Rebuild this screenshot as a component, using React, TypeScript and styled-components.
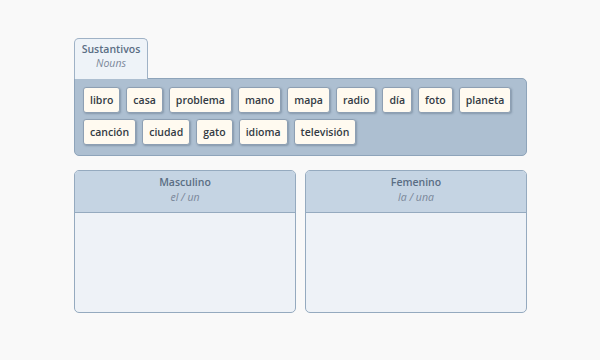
import React from "react";
import styled, { createGlobalStyle } from "styled-components";

const GlobalStyle = createGlobalStyle`
  html, body {
    margin: 0;
    padding: 0;
    background: #f9f9f9;
    font-family: "Open Sans", "DejaVu Sans", sans-serif;
  }
`;

const words = [
  "libro", "casa", "problema", "mano", "mapa", "radio", "día", "foto", "planeta",
  "canción", "ciudad", "gato", "idioma", "televisión",
];

const groups = [
  { title: "Masculino", sub: "el / un" },
  { title: "Femenino", sub: "la / una" },
];

const App = () => {
  return (
    <>
      <GlobalStyle />
      <Page>
        <Bank>
          <Tab>
            <TabTitle>Sustantivos</TabTitle>
            <TabSub>Nouns</TabSub>
          </Tab>
          <Panel>
            {words.map((w) => (
              <Chip key={w}>{w}</Chip>
            ))}
          </Panel>
        </Bank>
        <Targets>
          {groups.map((g) => (
            <Box key={g.title}>
              <BoxHeader>
                <BoxTitle>{g.title}</BoxTitle>
                <BoxSub>{g.sub}</BoxSub>
              </BoxHeader>
              <BoxBody />
            </Box>
          ))}
        </Targets>
      </Page>
    </>
  );
};

export default App;

const Page = styled.div`
  width: 453px;
  padding: 38px 0 0 74px;
`;

const Bank = styled.div`
  display: flex;
  flex-direction: column;
`;

const Tab = styled.div`
  width: 74px;
  height: 41px;
  box-sizing: border-box;
  background: #eef3f8;
  border: 1px solid #9fb2c6;
  border-bottom: none;
  border-radius: 5px 5px 0 0;
  text-align: center;
  padding-top: 3px;
  margin-bottom: -1px;
  position: relative;
  z-index: 1;
`;

const TabTitle = styled.div`
  font-size: 10.5px;
  font-weight: 600;
  color: #5a6e84;
  line-height: 14px;
`;

const TabSub = styled.div`
  font-size: 10.5px;
  font-style: italic;
  color: #7a8799;
  line-height: 15px;
`;

const Panel = styled.div`
  box-sizing: border-box;
  width: 453px;
  min-height: 78px;
  background: #adbfd1;
  border: 1px solid #8ea4ba;
  border-radius: 0 5px 5px 5px;
  padding: 8px 8px;
  display: flex;
  flex-wrap: wrap;
  gap: 6px 6px;
  align-content: flex-start;
`;

const Chip = styled.div`
  height: 26px;
  box-sizing: border-box;
  padding: 0 6px;
  display: flex;
  align-items: center;
  background: #fffaf0;
  border: 1px solid #8d9fb3;
  border-radius: 3px;
  box-shadow: 1px 1px 2px rgba(60, 80, 100, 0.35);
  font-size: 10.5px;
  font-weight: 600;
  color: #333a44;
`;

const Targets = styled.div`
  margin-top: 14px;
  display: grid;
  grid-template-columns: 1fr 1fr;
  gap: 9px;
`;

const Box = styled.div`
  height: 143px;
  box-sizing: border-box;
  border: 1px solid #95aabf;
  border-radius: 5px;
  background: #eef2f7;
  display: flex;
  flex-direction: column;
  overflow: hidden;
`;

const BoxHeader = styled.div`
  height: 42px;
  box-sizing: border-box;
  background: #c5d4e3;
  border-bottom: 1px solid #95aabf;
  text-align: center;
  padding-top: 4px;
`;

const BoxTitle = styled.div`
  font-size: 10.5px;
  font-weight: 600;
  color: #5a6e84;
  line-height: 15px;
`;

const BoxSub = styled.div`
  font-size: 10.5px;
  font-style: italic;
  color: #7a8799;
  line-height: 14px;
`;

const BoxBody = styled.div`
  flex: 1;
`;
